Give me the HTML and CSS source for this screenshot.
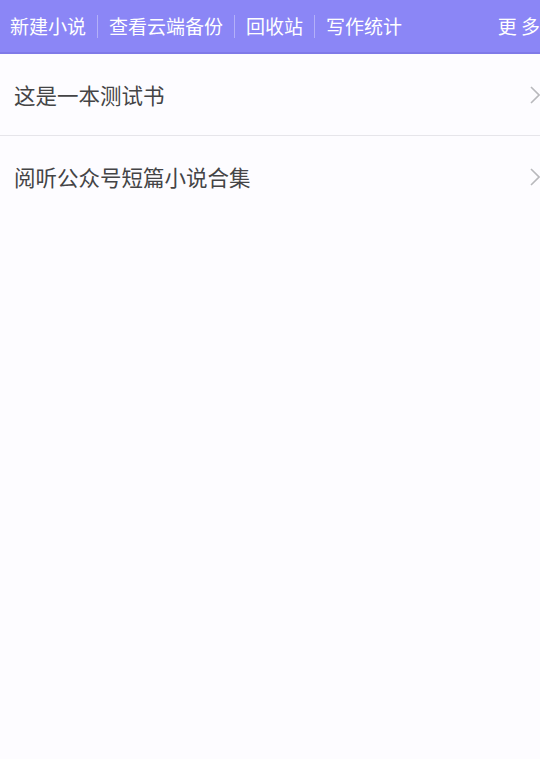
FILE: index.html
```html
<!DOCTYPE html>
<html lang="zh">
<head>
<meta charset="utf-8">
<link rel="stylesheet" href="styles.css">
</head>
<body>
<header class="topbar">
  <nav class="menu">
    <span class="item">新建小说</span>
    <span class="sep"></span>
    <span class="item">查看云端备份</span>
    <span class="sep"></span>
    <span class="item">回收站</span>
    <span class="sep"></span>
    <span class="item">写作统计</span>
  </nav>
  <span class="more">更 多</span>
</header>
<ul class="books">
  <li class="book">
    <span class="title">这是一本测试书</span>
    <svg class="chev" width="12" height="18" viewBox="0 0 12 18"><path d="M2 1 L10 9 L2 17" fill="none" stroke="#b8b8bc" stroke-width="1.6"/></svg>
  </li>
  <li class="book">
    <span class="title">阅听公众号短篇小说合集</span>
    <svg class="chev" width="12" height="18" viewBox="0 0 12 18"><path d="M2 1 L10 9 L2 17" fill="none" stroke="#b8b8bc" stroke-width="1.6"/></svg>
  </li>
</ul>
</body>
</html>
```
FILE: styles.css
```css
html, body {
  margin: 0;
  padding: 0;
  background: #fdfcff;
  font-family: "Noto Sans CJK SC", "Noto Sans", sans-serif;
  width: 540px;
  overflow: hidden;
}
.topbar {
  height: 52px;
  background: #8b86f6;
  border-bottom: 2px solid #7f7ae8;
  display: flex;
  align-items: center;
  justify-content: space-between;
  color: #ffffff;
  font-size: 19px;
  overflow: hidden;
}
.menu {
  display: flex;
  align-items: center;
  padding-left: 10px;
}
.item {
  line-height: 24px;
  white-space: nowrap;
}
.sep {
  width: 1px;
  height: 23px;
  background: rgba(255,255,255,0.35);
  margin: 0 11px;
}
.more {
  white-space: nowrap;
  margin-right: 0;
  line-height: 24px;
}
.books {
  list-style: none;
  margin: 0;
  padding: 0;
}
.book {
  height: 81px;
  border-bottom: 1px solid #e6e5ea;
  display: flex;
  align-items: center;
  justify-content: space-between;
  padding-left: 14px;
  padding-right: 0;
}
.book:last-child {
  border-bottom: none;
}
.title {
  font-size: 21.5px;
  color: #444446;
  white-space: nowrap;
}
.chev {
  margin-right: -1px;
}
```
